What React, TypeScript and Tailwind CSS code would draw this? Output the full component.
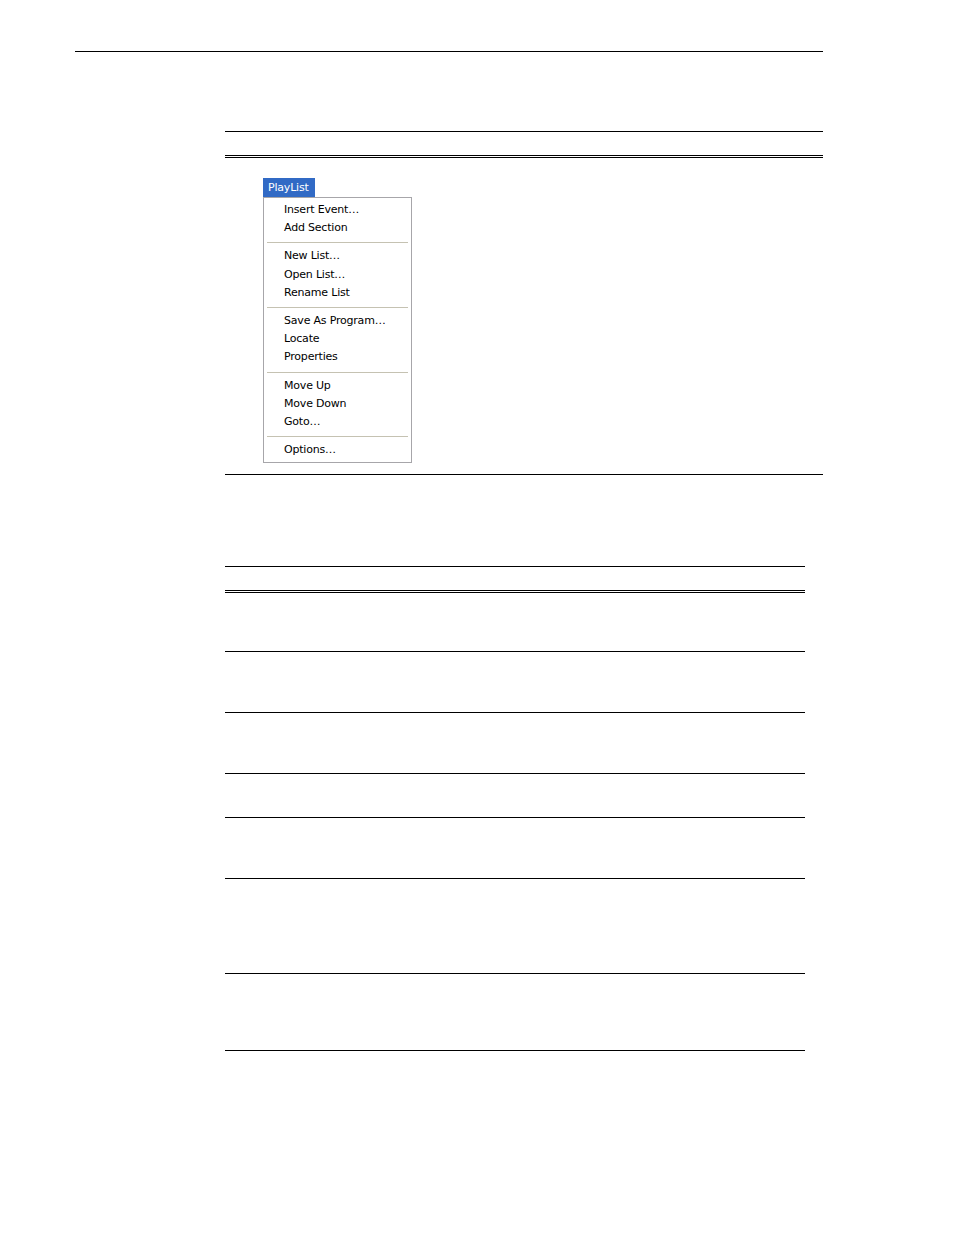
const groups: string[][] = [
  ['Insert Event…', 'Add Section'],
  ['New List…', 'Open List…', 'Rename List'],
  ['Save As Program…', 'Locate', 'Properties'],
  ['Move Up', 'Move Down', 'Goto…'],
  ['Options…'],
];

// heights of the body rows in the second table (from line to line)
const rowHeights = [58, 60, 60, 43, 60, 94, 76];

function PlayListMenu() {
  return (
    <div className="flex flex-col items-start font-['DejaVu_Sans',sans-serif] text-[11px] tracking-[-0.2px] text-black">
      <div className="h-[19px] w-[52px] bg-[#316ac5] px-[5px] leading-[19px] text-white">PlayList</div>
      <div className="w-[149px] border border-[#a7a6aa] bg-white pt-[3px] pb-[3px]">
        {groups.map((items, gi) => (
          <div key={gi}>
            {gi > 0 && <div className="mx-[3px] mt-[5px] mb-[4px] h-px bg-[#c5c2b2]" />}
            {items.map((label) => (
              <div key={label} className="h-[18.2px] pl-[20px] leading-[18px]">
                {label}
              </div>
            ))}
          </div>
        ))}
      </div>
    </div>
  );
}

export default function App() {
  return (
    <div className="min-h-[1235px] w-[954px] bg-white pt-[51px]">
      <div className="ml-[75px] h-px w-[748px] bg-black" />

      {/* first table: the PlayList menu */}
      <div className="ml-[225px] mt-[79px] w-[598px]">
        <div className="h-px bg-black" />
        <div className="h-[23px]" />
        <div className="h-[3px] border-y border-black" />
        <div className="pl-[38px] pt-[20px] pb-[11px]">
          <PlayListMenu />
        </div>
        <div className="h-px bg-black" />
      </div>

      {/* second table: empty rows */}
      <div className="ml-[225px] mt-[91px] w-[580px]">
        <div className="h-px bg-black" />
        <div className="h-[23px]" />
        <div className="h-[3px] border-y border-black" />
        {rowHeights.map((h, i) => (
          <div key={i} className="border-b border-black" style={{ height: h + 1 }} />
        ))}
      </div>
    </div>
  );
}
